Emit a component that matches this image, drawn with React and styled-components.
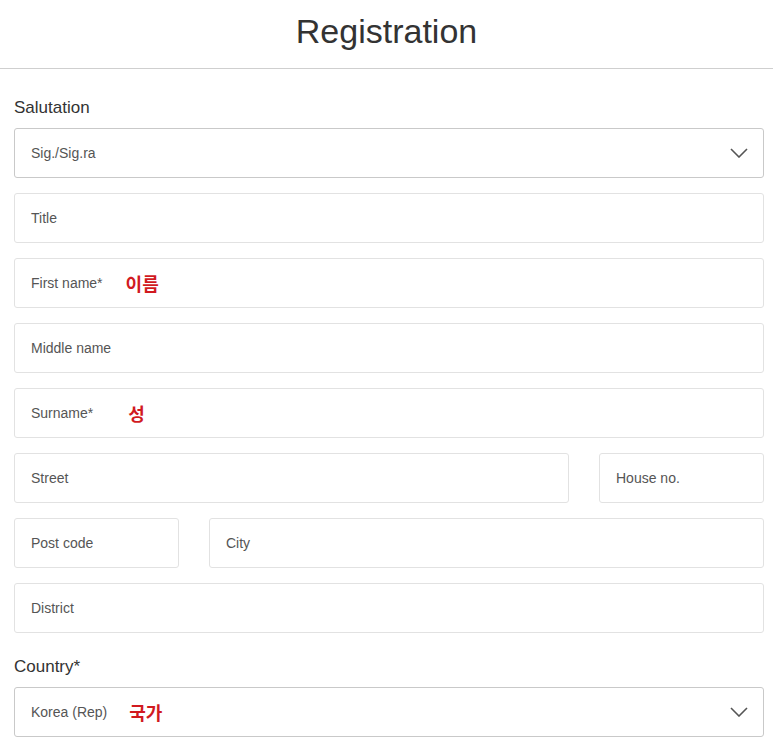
import React from "react";
import styled, { createGlobalStyle } from "styled-components";

const GlobalStyle = createGlobalStyle`
  html, body {
    margin: 0;
    padding: 0;
    background: #ffffff;
  }
  body {
    font-family: "Liberation Sans", Arial, sans-serif;
    color: #333;
  }
`;

const Chevron = () => (
  <ChevronSvg width="18" height="10" viewBox="0 0 18 10" fill="none">
    <path d="M1 1L9 9L17 1" stroke="#555" strokeWidth="1.6" />
  </ChevronSvg>
);

const App = () => {
  return (
    <>
      <GlobalStyle />
      <Header>
        <Title>Registration</Title>
      </Header>
      <Form>
        <Label>Salutation</Label>
        <Box select>
          <Placeholder>Sig./Sig.ra</Placeholder>
          <Chevron />
        </Box>
        <Row>
          <Box>
            <Placeholder>Title</Placeholder>
          </Box>
        </Row>
        <Row>
          <Box>
            <Placeholder>First name*</Placeholder>
            <Note offset={23}>이름</Note>
          </Box>
        </Row>
        <Row>
          <Box>
            <Placeholder>Middle name</Placeholder>
          </Box>
        </Row>
        <Row>
          <Box>
            <Placeholder>Surname*</Placeholder>
            <Note offset={35}>성</Note>
          </Box>
        </Row>
        <Row>
          <Box>
            <Placeholder>Street</Placeholder>
          </Box>
          <Box width={165}>
            <Placeholder>House no.</Placeholder>
          </Box>
        </Row>
        <Row>
          <Box width={165}>
            <Placeholder>Post code</Placeholder>
          </Box>
          <Box>
            <Placeholder>City</Placeholder>
          </Box>
        </Row>
        <Row>
          <Box>
            <Placeholder>District</Placeholder>
          </Box>
        </Row>
        <Label top={24}>Country*</Label>
        <Box select>
          <Placeholder>Korea (Rep)</Placeholder>
          <Note offset={22}>국가</Note>
          <Chevron />
        </Box>
      </Form>
    </>
  );
};

export default App;

const Header = styled.header`
  height: 68px;
  border-bottom: 1px solid #cfcfcf;
  display: flex;
  justify-content: center;
  align-items: center;
`;

const Title = styled.h1`
  margin: 0;
  font-size: 34px;
  font-weight: 400;
  color: #333;
  line-height: 1;
  margin-top: -7px;
`;

const Form = styled.form`
  padding: 29px 9px 16px 14px;
  display: flex;
  flex-direction: column;
`;

const Label = styled.label`
  font-size: 17px;
  line-height: 20px;
  color: #333;
  margin-top: ${(p) => (p.top ? `${p.top}px` : "0")};
  margin-bottom: 10px;
`;

const Row = styled.div`
  display: flex;
  gap: 30px;
  margin-top: 15px;
`;

const Box = styled.div`
  box-sizing: border-box;
  height: 50px;
  flex: ${(p) => (p.width ? `0 0 ${p.width}px` : "1 1 auto")};
  display: flex;
  align-items: center;
  padding: 0 15px 0 16px;
  border: 1px solid ${(p) => (p.select ? "#c9c9c9" : "#e2e2e2")};
  border-radius: 3px;
  background: #fff;
`;

const Placeholder = styled.span`
  font-size: 14px;
  color: #555;
`;

const Note = styled.span`
  margin-left: ${(p) => p.offset}px;
  font-family: "Noto Sans CJK KR", sans-serif;
  font-weight: 700;
  font-size: 18px;
  color: #d11a1f;
  line-height: 1;
`;

const ChevronSvg = styled.svg`
  margin-left: auto;
  display: block;
`;
